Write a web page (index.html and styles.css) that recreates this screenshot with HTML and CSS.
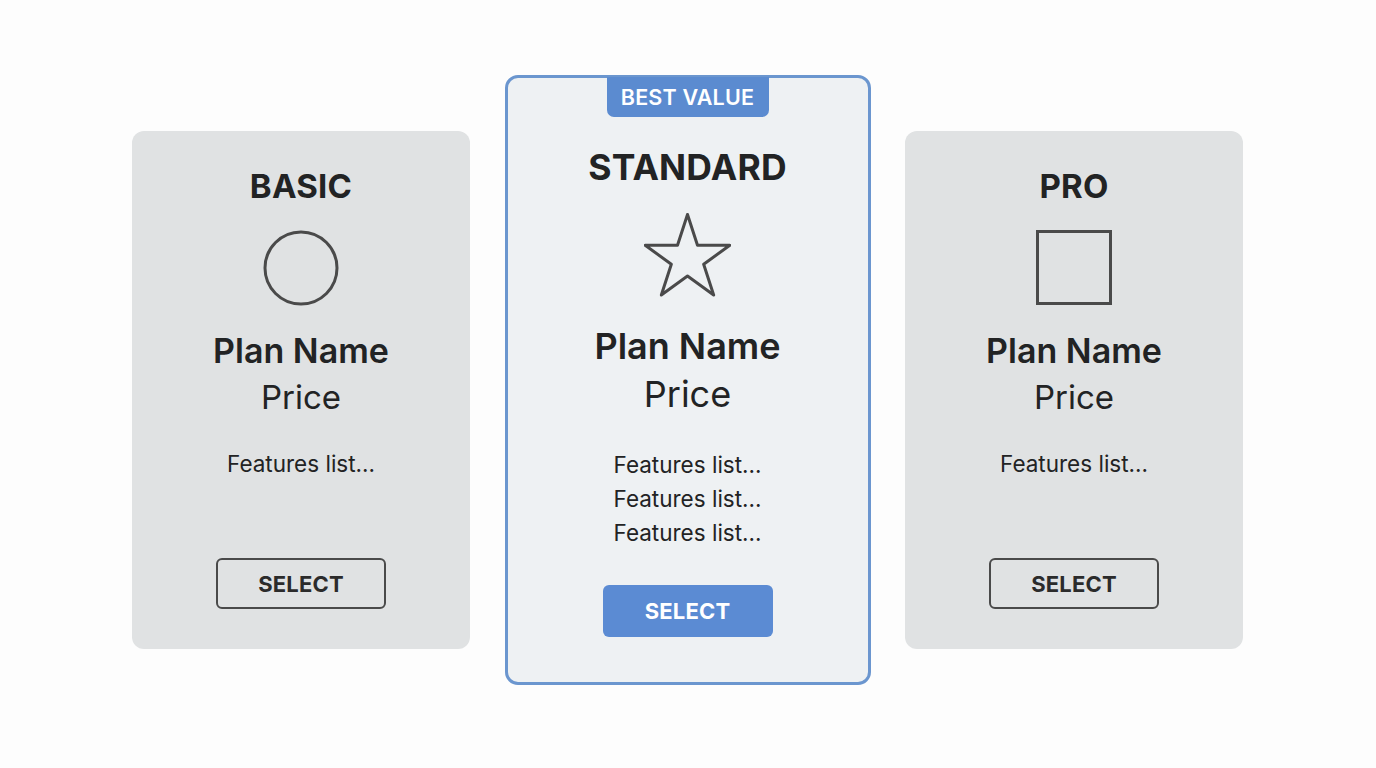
FILE: index.html
```html
<!DOCTYPE html>
<html>
<head>
<meta charset="utf-8">
<link rel="stylesheet" href="styles.css">
</head>
<body>
<main class="plans">
  <section class="card side">
    <h2 class="tier">BASIC</h2>
    <svg class="icon" width="76" height="76" viewBox="0 0 76 76"><circle cx="38" cy="38" r="36" fill="none" stroke="#4a4a4a" stroke-width="3"/></svg>
    <div class="plan">Plan Name</div>
    <div class="price">Price</div>
    <ul class="features"><li>Features list...</li></ul>
    <button class="btn outline">SELECT</button>
  </section>
  <section class="card featured">
    <div class="badge">BEST VALUE</div>
    <h2 class="tier">STANDARD</h2>
    <svg class="star" width="87" height="84" viewBox="-43.5 -46 87 84"><polygon points="0,-44.5 9.99,-13.75 42.32,-13.75 16.17,5.25 26.16,36 0,17 -26.16,36 -16.17,5.25 -42.32,-13.75 -9.99,-13.75" fill="none" stroke="#4a4a4a" stroke-width="3" stroke-linejoin="round"/></svg>
    <div class="plan">Plan Name</div>
    <div class="price">Price</div>
    <ul class="features"><li>Features list...</li><li>Features list...</li><li>Features list...</li></ul>
    <button class="btn solid">SELECT</button>
  </section>
  <section class="card side">
    <h2 class="tier">PRO</h2>
    <svg class="icon" width="76" height="76" viewBox="0 0 76 76"><rect x="1.5" y="1.5" width="73" height="72" fill="none" stroke="#4a4a4a" stroke-width="3"/></svg>
    <div class="plan">Plan Name</div>
    <div class="price">Price</div>
    <ul class="features"><li>Features list...</li></ul>
    <button class="btn outline">SELECT</button>
  </section>
</main>
</body>
</html>
```
FILE: styles.css
```css
* { box-sizing: border-box; }
html, body { margin: 0; padding: 0; }
body {
  width: 1376px;
  height: 768px;
  background: #fdfdfd;
  font-family: Inter, "Liberation Sans", sans-serif;
  color: #222324;
  overflow: hidden;
}
.plans {
  display: flex;
  justify-content: flex-start;
  align-items: flex-start;
  gap: 34.5px;
  padding-top: 75px;
  padding-left: 132px;
}
.card {
  display: flex;
  flex-direction: column;
  align-items: center;
  border-radius: 12px;
  position: relative;
}
.side {
  width: 338px;
  height: 518px;
  margin-top: 56px;
  background: #e0e2e3;
  padding: 35px 0 40px;
}
.featured {
  width: 366px;
  height: 610px;
  background: #eef1f3;
  border: 3px solid #6b96cf;
  border-radius: 13px;
  padding: 68px 0 45px;
}
.tier {
  margin: 0;
  font-size: 33px;
  line-height: 40px;
  font-weight: 700;
  letter-spacing: 0.2px;
}
.featured .tier { font-size: 35.5px; line-height: 44px; }
.icon { margin-top: 24px; display: block; }
.star { margin-top: 23px; display: block; }
.plan {
  margin-top: 26px;
  font-size: 34px;
  line-height: 38px;
  font-weight: 600;
}
.price {
  margin-top: 8px;
  font-size: 33px;
  line-height: 38px;
  font-weight: 400;
}
.featured .plan { margin-top: 29px; font-size: 36px; line-height: 40px; }
.featured .price { font-size: 36px; line-height: 40px; }
.features {
  list-style: none;
  margin: 31px 0 0;
  padding: 0;
  font-size: 22.5px;
  line-height: 34px;
  text-align: center;
}
.featured .features { margin-top: 34px; }
.btn {
  margin-top: auto;
  width: 170px;
  height: 51px;
  border-radius: 6px;
  font-family: Inter, "Liberation Sans", sans-serif;
  font-size: 22px;
  font-weight: 700;
  letter-spacing: 0.2px;
  cursor: pointer;
}
.outline {
  background: transparent;
  border: 2.5px solid #4a4a4a;
  color: #2b2b2b;
}
.solid {
  height: 52px;
  background: #5b8bd3;
  border: none;
  color: #fff;
}
.badge {
  position: absolute;
  top: -1px;
  left: 50%;
  transform: translateX(-50%);
  width: 162px;
  height: 40px;
  background: #5b8bd0;
  color: #fff;
  border-radius: 0 0 7px 7px;
  font-size: 21.5px;
  font-weight: 600;
  line-height: 40px;
  text-align: center;
  letter-spacing: 0.2px;
}
```
